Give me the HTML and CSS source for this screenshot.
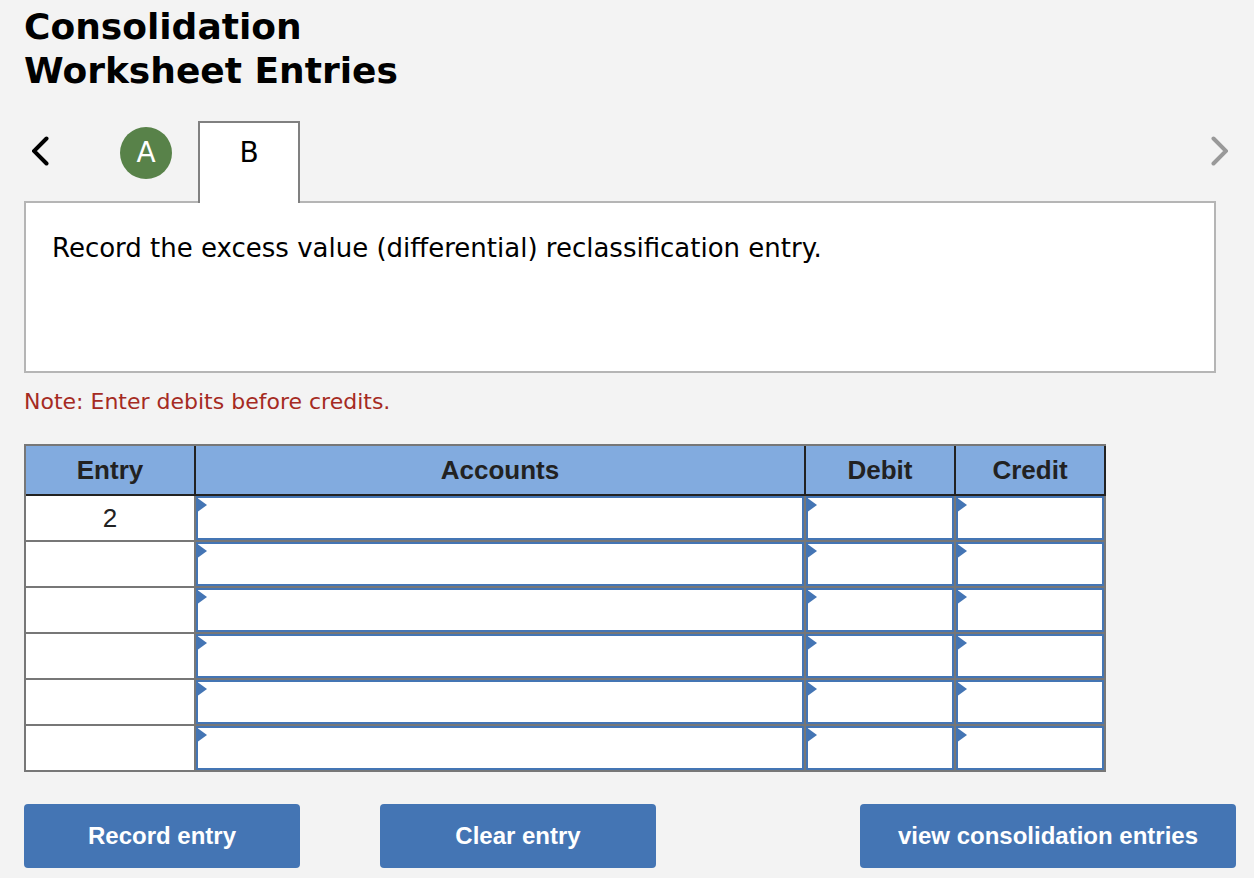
FILE: index.html
```html
<!DOCTYPE html>
<html lang="en">
<head>
  <meta charset="UTF-8">
  <meta name="viewport" content="width=device-width, initial-scale=1">
  <title>Consolidation Worksheet Entries</title>
  <link rel="stylesheet" href="styles.css">
</head>
<body>
  <h1>Consolidation<br>Worksheet Entries</h1>

  <nav class="tabs">
    <button type="button" class="arrow prev" aria-label="Previous">
      <svg width="18" height="30" viewBox="0 0 18 30"><polyline points="14.5,2.5 2,15 14.5,27.5"/></svg>
    </button>
    <button type="button" class="tab done">A</button>
    <button type="button" class="tab active">B</button>
    <button type="button" class="arrow next" aria-label="Next">
      <svg width="18" height="30" viewBox="0 0 18 30"><polyline points="3.5,2.5 16,15 3.5,27.5"/></svg>
    </button>
  </nav>

  <div class="panel">Record the excess value (differential) reclassification entry.</div>

  <p class="note">Note: Enter debits before credits.</p>

  <form>
    <table class="journal">
      <thead>
        <tr>
          <th class="col-entry">Entry</th>
          <th>Accounts</th>
          <th class="col-amount">Debit</th>
          <th class="col-amount">Credit</th>
        </tr>
      </thead>
      <tbody>
        <tr>
          <td>2</td>
          <td class="field"><input type="text" aria-label="Account, row 1"></td>
          <td class="field"><input type="text" aria-label="Debit, row 1"></td>
          <td class="field"><input type="text" aria-label="Credit, row 1"></td>
        </tr>
        <tr>
          <td></td>
          <td class="field"><input type="text" aria-label="Account, row 2"></td>
          <td class="field"><input type="text" aria-label="Debit, row 2"></td>
          <td class="field"><input type="text" aria-label="Credit, row 2"></td>
        </tr>
        <tr>
          <td></td>
          <td class="field"><input type="text" aria-label="Account, row 3"></td>
          <td class="field"><input type="text" aria-label="Debit, row 3"></td>
          <td class="field"><input type="text" aria-label="Credit, row 3"></td>
        </tr>
        <tr>
          <td></td>
          <td class="field"><input type="text" aria-label="Account, row 4"></td>
          <td class="field"><input type="text" aria-label="Debit, row 4"></td>
          <td class="field"><input type="text" aria-label="Credit, row 4"></td>
        </tr>
        <tr>
          <td></td>
          <td class="field"><input type="text" aria-label="Account, row 5"></td>
          <td class="field"><input type="text" aria-label="Debit, row 5"></td>
          <td class="field"><input type="text" aria-label="Credit, row 5"></td>
        </tr>
        <tr>
          <td></td>
          <td class="field"><input type="text" aria-label="Account, row 6"></td>
          <td class="field"><input type="text" aria-label="Debit, row 6"></td>
          <td class="field"><input type="text" aria-label="Credit, row 6"></td>
        </tr>
      </tbody>
    </table>

    <div class="actions">
      <button type="button" class="btn">Record entry</button>
      <button type="reset" class="btn">Clear entry</button>
      <button type="button" class="btn view">view consolidation entries</button>
    </div>
  </form>
</body>
</html>
```

FILE: styles.css
```css
* {
  box-sizing: border-box;
}
body {
  margin: 0;
  padding: 5px 18px 10px 24px;
  background-color: #f3f3f3;
  color: #000;
  font-family: Verdana, "DejaVu Sans", sans-serif;
  font-size: 26px;
}
h1 {
  margin: 0;
  font-size: 36px;
  line-height: 44px;
}
button {
  font-family: inherit;
  cursor: pointer;
}

/* tab strip */
.tabs {
  display: flex;
  align-items: flex-start;
  margin-top: 28px;
}
.arrow {
  padding: 15px 8px;
  border: none;
  background: none;
}
.arrow svg {
  display: block;
  fill: none;
  stroke: #000;
  stroke-width: 4;
  stroke-linecap: round;
}
.next {
  margin-left: auto;
}
.next svg {
  stroke: #999;
}
.tab {
  font-size: 28px;
  line-height: 52px;
}
.done {
  width: 52px;
  height: 52px;
  margin: 6px 26px 0 62px;
  padding: 0;
  border: none;
  border-radius: 50%;
  background-color: #588249;
  color: #fff;
}
/* covers the top border of the panel */
.active {
  position: relative;
  width: 102px;
  margin-bottom: -2px;
  padding: 4px 0 24px;
  border: 2px solid #808080;
  border-bottom: none;
  background-color: #fff;
  color: #000;
}

.panel {
  min-height: 172px;
  margin-right: 20px;
  padding: 28px 26px;
  border: 2px solid #b5b5b5;
  background-color: #fff;
  line-height: 34px;
}
.note {
  margin: 14px 0 28px;
  color: #a52a22;
  font-size: 22px;
  line-height: 29px;
}

/* journal entry table */
.journal {
  width: 100%;
  max-width: 1082px;
  border-top: 2px solid #777;
  border-left: 2px solid #777;
  border-spacing: 0;
  table-layout: fixed;
  background-color: #fff;
  color: #222;
  font-family: Arial, "Liberation Sans", sans-serif;
}
.journal th {
  height: 50px;
  padding: 0;
  border-right: 2px solid #222;
  border-bottom: 2px solid #222;
  background-color: #82abdf;
}
.journal td {
  height: 46px;
  padding: 0;
  border-right: 2px solid #777;
  border-bottom: 2px solid #777;
  text-align: center;
}
.col-entry {
  width: 170px;
}
.col-amount {
  width: 150px;
}
.field {
  position: relative;
}
.field::before {
  content: "";
  position: absolute;
  top: 1px;
  left: 0;
  width: 11px;
  height: 16px;
  background-color: #4475b4;
  clip-path: polygon(0 0, 100% 50%, 0 100%);
}
.field input {
  display: block;
  width: 100%;
  height: 44px;
  padding: 0 12px;
  border: 2px solid #4475b4;
  border-radius: 0;
  background-color: #fff;
  color: inherit;
  font: inherit;
}

.actions {
  display: flex;
  gap: 80px;
  margin-top: 32px;
}
.btn {
  width: 276px;
  height: 64px;
  padding: 0;
  border: none;
  border-radius: 4px;
  background-color: #4475b4;
  color: #fff;
  font-family: Arial, "Liberation Sans", sans-serif;
  font-size: 24px;
  font-weight: bold;
}
.view {
  width: 376px;
  margin-left: auto;
}
```
